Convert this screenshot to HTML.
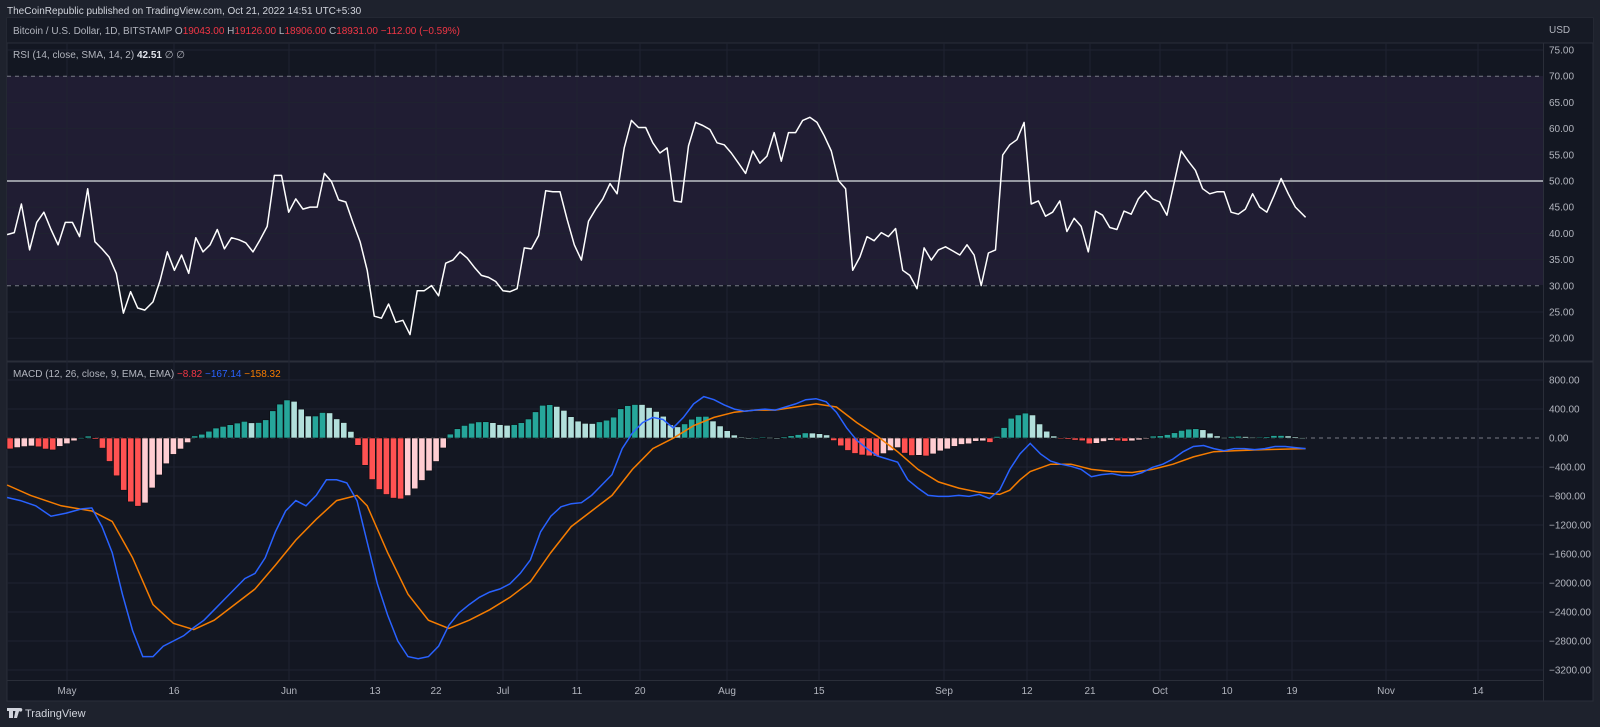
<!DOCTYPE html>
<html><head><meta charset="utf-8"><style>
html,body{margin:0;padding:0;background:#1e222d;width:1600px;height:727px;overflow:hidden;font-family:"Liberation Sans",sans-serif}
svg{position:absolute;left:0;top:0}
</style></head><body>
<svg id="s" width="1600" height="727" viewBox="0 0 1600 727" xmlns="http://www.w3.org/2000/svg" font-family="Liberation Sans, sans-serif">
<rect x="0" y="0" width="1600" height="727" fill="#1e222d"/>
<rect x="7" y="18" width="1586" height="683" fill="#131722" stroke="#2a2e39"/>
<rect x="7" y="18" width="1586" height="25" fill="#161a25"/>
<line x1="7" y1="43" x2="1593" y2="43" stroke="#2a2e39"/>
<line x1="7" y1="361.5" x2="1593" y2="361.5" stroke="#2a2e39" stroke-width="2"/>
<line x1="7" y1="680.5" x2="1543" y2="680.5" stroke="#2a2e39"/>
<line x1="1543.5" y1="43" x2="1543.5" y2="701" stroke="#2a2e39"/>
<rect x="7" y="76" width="1536" height="209" fill="#201d33"/>
<g id="grid" stroke="#1f2331" stroke-width="1"></g>
<g id="plot"></g>
<text x="7" y="14" font-size="10" fill="#d1d4dc">TheCoinRepublic published on TradingView.com, Oct 21, 2022 14:51 UTC+5:30</text>
<text x="13" y="34" font-size="10" fill="#b2b5be">Bitcoin / U.S. Dollar, 1D, BITSTAMP  <tspan>O</tspan><tspan fill="#f23645">19043.00</tspan>  H<tspan fill="#f23645">19126.00</tspan>  L<tspan fill="#f23645">18906.00</tspan>  C<tspan fill="#f23645">18931.00</tspan>  <tspan fill="#f23645">−112.00 (−0.59%)</tspan></text>
<text x="13" y="58" font-size="10" fill="#b2b5be">RSI (14, close, SMA, 14, 2)  <tspan fill="#e0e3eb" font-weight="bold">42.51</tspan>  ∅  ∅</text>
<text x="13" y="377" font-size="10" fill="#b2b5be">MACD (12, 26, close, 9, EMA, EMA)  <tspan fill="#f23645">−8.82</tspan>  <tspan fill="#2962ff">−167.14</tspan>  <tspan fill="#f57c00">−158.32</tspan></text>
<text x="1549" y="33" font-size="10" fill="#b2b5be">USD</text>
<g id="axis" font-size="10" fill="#b2b5be"></g>
<g transform="translate(7,706)">
<path d="M0 2h9v3h-3v7h-4v-7h-2z M9 2h4l-3 10h-3z" fill="#d1d4dc"/>
<circle cx="13.5" cy="3.8" r="1.8" fill="#d1d4dc"/>
<text x="18" y="11" font-size="11" fill="#d1d4dc">TradingView</text>
</g>
</svg>
<script>
const NS="http://www.w3.org/2000/svg";
function el(p,t,a,txt){const e=document.createElementNS(NS,t);for(const k in a)e.setAttribute(k,a[k]);if(txt!==undefined)e.textContent=txt;p.appendChild(e);return e;}
const grid=document.getElementById('grid'),plot=document.getElementById('plot'),axis=document.getElementById('axis');
const ticks=[["May",67],["16",174],["Jun",289],["13",375],["22",436],["Jul",503],["11",577],["20",640],["Aug",727],["15",819],["Sep",944],["12",1027],["21",1090],["Oct",1160],["10",1227],["19",1292],["Nov",1386],["14",1478]];
ticks.forEach(([t,x])=>{el(grid,'line',{x1:x,y1:43,x2:x,y2:680});el(axis,'text',{x:x,y:694,'text-anchor':'middle'},t);});
const ry=v=>50+(75-v)*5.24;
for(let v=20;v<=75;v+=5){const y=ry(v);if(v!=70&&v!=30&&v!=50)el(grid,'line',{x1:7,y1:y,x2:1543,y2:y});el(axis,'text',{x:1549,y:y+3.5},v.toFixed(2));}
el(plot,'line',{x1:7,y1:ry(70),x2:1543,y2:ry(70),stroke:'#787b86','stroke-dasharray':'4 4'});
el(plot,'line',{x1:7,y1:ry(30),x2:1543,y2:ry(30),stroke:'#787b86','stroke-dasharray':'4 4'});
el(plot,'line',{x1:7,y1:ry(50),x2:1543,y2:ry(50),stroke:'#9598a1','stroke-width':2});
const my=v=>438-v*29/400;
for(let v=800;v>=-3200;v-=400){const y=my(v);if(v!=0)el(grid,'line',{x1:7,y1:y,x2:1543,y2:y});el(axis,'text',{x:1549,y:y+3.5},v==0?"0.00":(v<0?"−":"")+Math.abs(v).toFixed(2));}
el(plot,'line',{x1:7,y1:438,x2:1543,y2:438,stroke:'#787b86','stroke-dasharray':'4 4'});
const X=x=>1.02*x;
const rsi=[[7,230],[14,228],[21,200],[29,245],[36,218],[43,208],[50,225],[57,240],[64,218],[71,218],[78,232],[86,185],[93,237],[100,244],[107,252],[114,268],[121,307],[128,286],[135,302],[142,304],[150,296],[157,275],[164,247],[171,265],[178,250],[185,268],[192,233],[199,247],[206,240],[213,225],[220,244],[227,233],[234,235],[241,238],[248,247],[255,235],[262,222],[269,172],[276,172],[283,208],[290,195],[297,205],[304,203],[311,203],[318,170],[325,178],[332,196],[339,198],[346,218],[353,237],[360,265],[367,310],[374,312],[381,298],[388,316],[395,314],[402,328],[409,285],[416,285],[423,280],[430,290],[437,258],[444,255],[451,247],[458,253],[465,262],[472,270],[479,272],[486,276],[493,285],[500,286],[507,283],[514,243],[521,244],[528,231],[535,187],[542,188],[549,188],[556,215],[563,240],[570,255],[577,217],[584,205],[591,195],[598,180],[605,190],[612,145],[619,118],[626,125],[633,125],[640,140],[647,150],[654,145],[661,197],[668,198],[675,143],[682,120],[689,123],[696,127],[703,140],[710,142],[717,150],[724,160],[731,170],[738,148],[745,160],[752,153],[759,130],[766,158],[773,130],[780,130],[787,118],[794,115],[801,120],[808,133],[815,148],[822,177],[829,185],[836,265],[843,252],[850,232],[857,236],[864,228],[871,232],[878,224],[885,265],[892,270],[899,283],[906,243],[913,255],[920,245],[927,242],[934,246],[941,250],[948,240],[955,250],[962,280],[969,248],[976,245],[983,152],[990,142],[997,137],[1004,120],[1011,200],[1018,197],[1025,212],[1032,208],[1039,197],[1046,227],[1053,214],[1060,222],[1067,247],[1074,207],[1081,211],[1088,223],[1095,225],[1102,207],[1109,210],[1116,195],[1123,187],[1130,195],[1137,198],[1144,211],[1151,180],[1158,148],[1165,158],[1172,167],[1179,185],[1186,190],[1193,188],[1200,188],[1207,208],[1214,210],[1221,205],[1228,190],[1235,203],[1242,208],[1249,192],[1256,175],[1263,190],[1270,203],[1280,213]];
el(plot,'polyline',{points:rsi.map(p=>X(p[0]).toFixed(1)+","+(p[1]*1.02).toFixed(1)).join(" "),fill:'none',stroke:'#ffffff','stroke-width':1.5,'stroke-linejoin':'round'});
const blue=[[7,487],[20,490],[35,495],[50,505],[65,502],[80,498],[90,497],[100,515],[110,540],[120,580],[130,615],[140,640],[150,640],[160,630],[170,625],[180,620],[190,612],[200,605],[210,595],[220,585],[230,575],[240,565],[250,560],[260,545],[270,520],[280,500],[290,490],[300,495],[310,485],[320,470],[330,470],[340,473],[350,490],[360,530],[370,570],[380,600],[390,625],[400,640],[410,642],[420,640],[430,630],[440,610],[450,598],[460,590],[470,583],[480,578],[490,575],[500,570],[510,560],[520,547],[530,520],[540,505],[550,496],[560,493],[570,492],[580,485],[590,475],[600,465],[610,440],[620,425],[630,415],[640,410],[650,412],[660,420],[670,410],[680,397],[690,390],[700,393],[710,398],[720,402],[730,404],[740,403],[750,402],[760,403],[770,400],[780,397],[790,393],[800,392],[810,395],[820,405],[830,420],[840,432],[850,440],[860,447],[870,450],[880,453],[890,470],[900,478],[910,485],[920,486],[930,486],[940,485],[950,486],[960,484],[970,488],[980,480],[990,460],[1000,445],[1010,435],[1020,445],[1030,452],[1040,455],[1050,457],[1060,460],[1070,467],[1080,465],[1090,464],[1100,466],[1110,466],[1120,463],[1130,458],[1140,455],[1150,450],[1160,443],[1170,438],[1180,437],[1190,440],[1200,442],[1210,440],[1220,440],[1230,441],[1240,440],[1250,438],[1260,438],[1270,439],[1280,440]];
const orange=[[7,475],[30,485],[60,495],[90,500],[110,510],[130,545],[150,590],[170,608],[190,614],[210,605],[230,590],[250,575],[270,552],[290,528],[310,508],[330,490],[350,485],[360,495],[380,540],[400,580],[420,605],[440,613],[460,605],[480,595],[500,583],[520,568],[540,540],[560,515],[580,500],[600,485],[620,460],[640,440],[660,430],[680,418],[700,410],[720,405],[740,403],[760,403],[780,400],[800,397],[820,400],[840,415],[860,428],[880,443],[900,460],[920,472],[940,478],[960,482],[980,484],[990,480],[1000,470],[1010,462],[1030,455],[1050,455],[1070,460],[1090,462],[1110,463],[1130,460],[1150,455],[1170,448],[1190,443],[1210,442],[1240,441],[1280,440]];
const Y=y=>1.04*y-9;
const B=blue.map(p=>[X(p[0]),Y(p[1])]),O=orange.map(p=>[X(p[0]),Y(p[1])]);
function interp(a,x){if(x<=a[0][0])return a[0][1];for(let i=1;i<a.length;i++)if(a[i][0]>=x){const t=(x-a[i-1][0])/(a[i][0]-a[i-1][0]);return a[i-1][1]+t*(a[i][1]-a[i-1][1]);}return a[a.length-1][1];}
let prev=0;const hg=el(plot,'g',{});
for(let x=10;x<=1308;x+=7.1){let h=(interp(O,x)-interp(B,x))*0.92;
 let c;if(h>=0)c=h>=prev?'#26a69a':'#b2dfdb';else c=h<prev?'#ff5252':'#ffcdd2';
 const y0=438,y1=438-h;el(hg,'rect',{x:x-3,y:Math.min(y0,y1),width:6.2,height:Math.max(1,Math.abs(h)),fill:c,stroke:'#0b0d12','stroke-width':0.6});prev=h;}
el(plot,'polyline',{points:O.map(p=>p[0].toFixed(1)+","+p[1].toFixed(1)).join(" "),fill:'none',stroke:'#f57c00','stroke-width':1.5});
el(plot,'polyline',{points:B.map(p=>p[0].toFixed(1)+","+p[1].toFixed(1)).join(" "),fill:'none',stroke:'#2962ff','stroke-width':1.5});
</script>
</body></html>
